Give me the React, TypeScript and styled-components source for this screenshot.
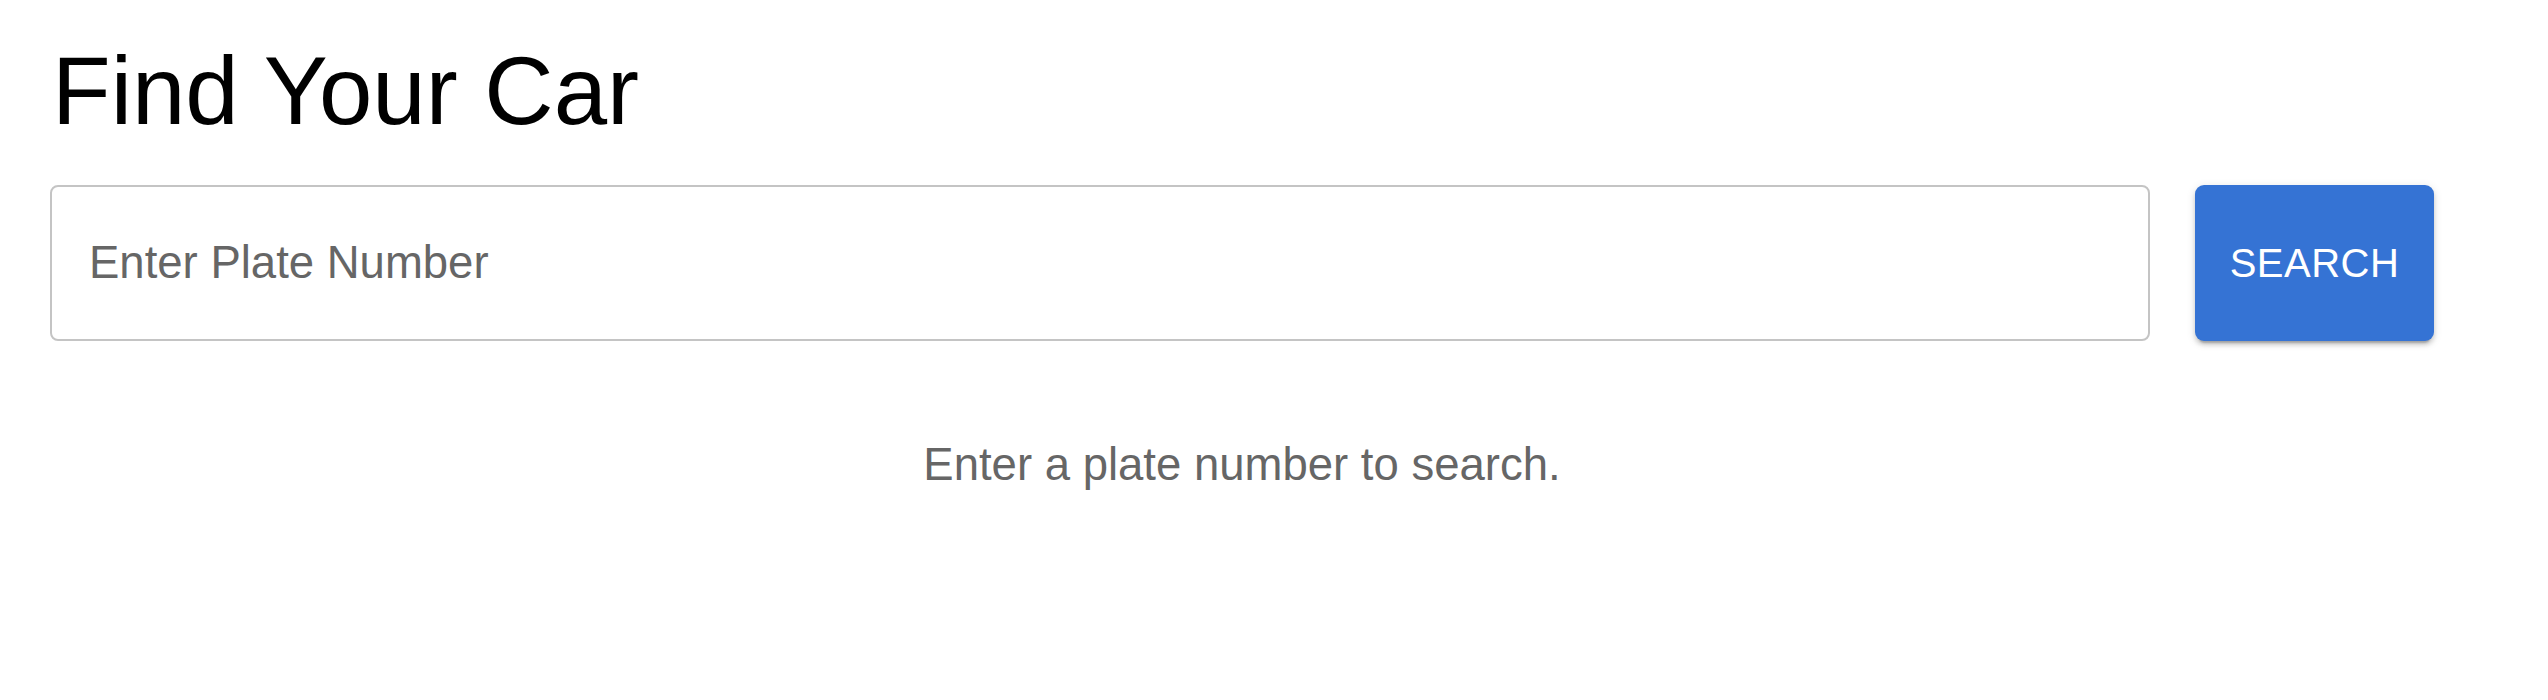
import styled, { createGlobalStyle } from 'styled-components';

const GlobalStyle = createGlobalStyle`
  html, body {
    margin: 0;
    padding: 0;
    background: #ffffff;
  }
  body {
    font-family: "Liberation Sans", Arial, Helvetica, sans-serif;
  }
`;

const Page = styled.main`
  box-sizing: border-box;
  width: 2434px;
  padding: 33px 0 0 50px;
`;

const Title = styled.h1`
  margin: 0 0 37px;
  padding-left: 2px;
  font-size: 96px;
  font-weight: 400;
  line-height: 115px;
  color: #000000;
`;

const SearchRow = styled.form`
  display: flex;
  align-items: stretch;
  gap: 45px;
  height: 156px;
`;

const PlateInput = styled.input`
  flex: 1;
  box-sizing: border-box;
  min-width: 0;
  height: 100%;
  padding: 0 37px;
  border: 2px solid #c4c4c4;
  border-radius: 8px;
  font-family: inherit;
  font-size: 45.5px;
  color: #222222;
  background: #ffffff;
  outline: none;

  &::placeholder {
    color: #666666;
    opacity: 1;
  }
`;

const SearchButton = styled.button`
  box-sizing: border-box;
  width: 239px;
  height: 100%;
  padding: 0;
  border: none;
  border-radius: 9px;
  background: #3573d4;
  color: #ffffff;
  font-family: inherit;
  font-size: 40px;
  font-weight: 400;
  letter-spacing: 0.5px;
  text-transform: uppercase;
  cursor: pointer;
  box-shadow: 0 6px 2px -4px rgba(0, 0, 0, 0.2), 0 4px 4px 0 rgba(0, 0, 0, 0.14),
    0 2px 10px 0 rgba(0, 0, 0, 0.12);
`;

const Message = styled.p`
  margin: 90px 0 0;
  text-align: center;
  font-size: 45.5px;
  line-height: 1.5;
  color: #666666;
`;

export default function App() {
  return (
    <>
      <GlobalStyle />
      <Page>
        <Title>Find Your Car</Title>
        <SearchRow onSubmit={e => e.preventDefault()}>
          <PlateInput type="text" placeholder="Enter Plate Number" />
          <SearchButton type="submit">Search</SearchButton>
        </SearchRow>
        <Message>Enter a plate number to search.</Message>
      </Page>
    </>
  );
}
